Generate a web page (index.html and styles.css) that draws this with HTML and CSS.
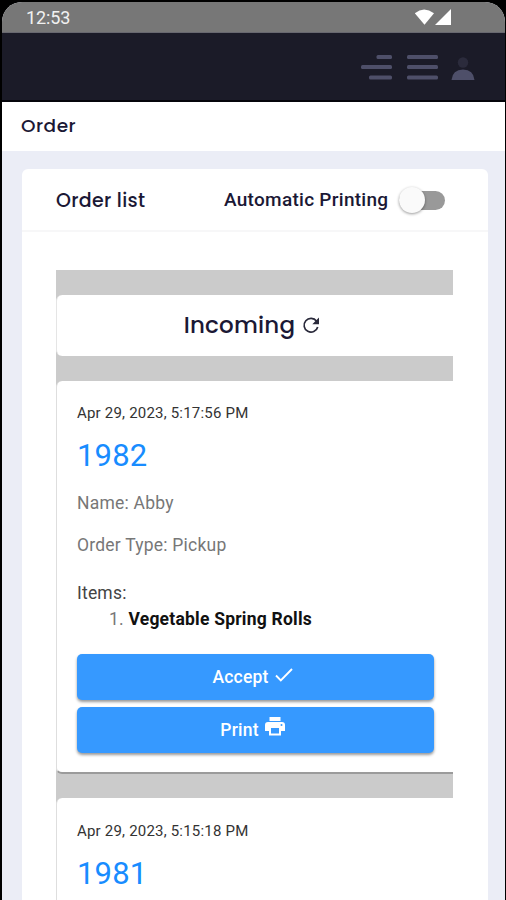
FILE: index.html
```html
<!DOCTYPE html>
<html lang="en">
<head>
<meta charset="utf-8">
<title>Order</title>
<link rel="stylesheet" href="styles.css">
</head>
<body>
<div class="screen">
  <div class="status">
    <span class="clock">12:53</span>
    <svg class="signals" width="38" height="18" viewBox="0 0 38 18"><path d="M.8 5.200Q10 -2 20 5.200L10.500 16.800Z" fill="#fff"/><path d="M37 1v16H21z" fill="#fff"/></svg>
  </div>
  <header class="topbar">
    <svg width="31" height="27" viewBox="0 0 31 27"><g fill="#4e4f69"><rect x="15.500" y="1" width="15.500" height="4" rx="1.500"/><rect y="11" width="31" height="4" rx="1.500"/><rect x="8" y="21.500" width="23" height="4" rx="1.500"/></g></svg>
    <svg class="menu" width="31" height="27" viewBox="0 0 31 27"><g fill="#4e4f69"><rect y="1" width="31" height="4" rx="1.500"/><rect y="11" width="31" height="4" rx="1.500"/><rect y="21.500" width="31" height="4" rx="1.500"/></g></svg>
    <svg class="user" width="24" height="27" viewBox="0 0 24 27"><circle cx="12" cy="8.500" r="5.200" fill="#2b2b3c"/><path d="M.5 26Q1.500 15.500 12 15.500T23.500 26z" fill="#4e4f69"/></svg>
  </header>
  <div class="page-title"><h1>Order</h1></div>
  <main class="content">
    <section class="panel">
      <div class="panel-head">
        <h2 class="list-title">Order list</h2>
        <span class="auto">Automatic Printing</span>
        <span class="toggle"><span class="knob"></span></span>
      </div>
      <div class="column">
        <div class="incoming"><h3>Incoming</h3><svg width="18" height="18" viewBox="0 0 18 18"><path d="M14.600 5.200A6.900 6.900 0 1 0 15.700 11" fill="none" stroke="#29293a" stroke-width="1.700"/><path d="M17 1.500v6.700h-6.700z" fill="#29293a"/></svg></div>
        <article class="order">
          <div class="date">Apr 29, 2023, 5:17:56 PM</div>
          <div class="number">1982</div>
          <div class="detail">Name: Abby</div>
          <div class="detail">Order Type: Pickup</div>
          <div class="items">Items:</div>
          <div class="item">1. <b>Vegetable Spring Rolls</b></div>
          <button class="btn"><span class="accept">Accept</span><svg class="check" width="18" height="16" viewBox="0 0 18 16"><path d="M1 8.500l4.800 4.800L17 2" fill="none" stroke="#fff" stroke-width="1.900"/></svg></button>
          <button class="btn"><span class="print">Print</span><svg class="printer" width="20" height="19" viewBox="0 0 20 19"><path fill="#fff" fill-rule="evenodd" d="M4.500 0h11v4h-11zM3 5h14a3 3 0 0 1 3 3v6h-4v4.500H4V14H0V8a3 3 0 0 1 3-3zM6 11v5.500h8V11zM16.500 7a1 1 0 1 0 .01 2 1 1 0 0 0-.01-2z"/></svg></button>
        </article>
        <article class="order next">
          <div class="date">Apr 29, 2023, 5:15:18 PM</div>
          <div class="number">1981</div>
        </article>
      </div>
    </section>
  </main>
</div>
</body>
</html>
```
FILE: styles.css
```css
* { box-sizing: border-box; }
body { margin: 0; background: #000; font-family: Roboto, sans-serif; height: 900px; overflow: hidden; }
h1, h2, h3 { margin: 0; font-family: Poppins, Inter, sans-serif; font-weight: 500; color: #1b1835; white-space: nowrap; }
.screen { margin: 2px 1px 0 2px; height: 898px; border-radius: 20px 20px 0 0; overflow: hidden; background: #ebedf6; }
.status { height: 31px; background: #777; border-bottom: 1px solid #686870; display: flex; align-items: center; justify-content: space-between; padding: 0 53px 0 24px; }
.clock { color: #f1f1f1; font-size: 18px; line-height: 30px; letter-spacing: -.1px; padding-top: 1px; }
.topbar { height: 69px; background: #1b1b28; border-bottom: 2px solid #05050b; display: flex; align-items: center; justify-content: flex-end; padding-right: 30px; }
.topbar svg { position: relative; top: 1px; }
.menu { margin: 0 13px 0 15px; }
.page-title { height: 49px; background: #fff; padding-left: 19px; display: flex; align-items: center; }
.page-title h1 { font-size: 18.5px; line-height: 48px; padding-bottom: 1px; letter-spacing: .5px; }
.content { padding: 18px 17px 0 20px; }
.panel { height: 760px; background: #fff; border-radius: 6px 6px 0 0; }
.panel-head { height: 63px; border-bottom: 2px solid #f7f7f8; display: flex; align-items: center; padding-left: 34px; }
.list-title { font-size: 19px; width: 168px; letter-spacing: .3px; padding-top: 2px; }
.auto { font-size: 19px; font-weight: 500; color: #1b1835; width: 175px; white-space: nowrap; letter-spacing: .28px; }
.toggle { position: relative; width: 46px; height: 19px; top: 1px; border-radius: 10px; background: #999; }
.knob { position: absolute; left: 0; top: -4px; width: 26px; height: 26px; border-radius: 50%; background: #fafafa; box-shadow: 0 1px 3px #0006; }
.column { margin: 38px 35px 0 34px; padding-top: 25px; background: #cbcbcb; }
.incoming { height: 61px; background: #fff; border-left: 1px solid #e5e5e5; border-radius: 6px 0 0 6px; display: flex; align-items: center; justify-content: center; gap: 7px; padding: 0 6px 2px 0; }
.incoming h3 { font-size: 23px; letter-spacing: .2px; }
.order { margin-top: 25px; height: 393px; background: #fff; border-left: 1px solid #dedede; border-bottom: 2px solid #9b9b9b; border-radius: 6px 0 0 6px; padding: 20px 19px 0 20px; }
.order.next { margin-top: 24px; padding-top: 21px; }
.date { font-size: 15px; line-height: 24px; color: #333; letter-spacing: .2px; }
.number { font-size: 31px; line-height: 40px; margin-top: 11px; color: #188cff; letter-spacing: .15px; }
.detail { font-size: 17.5px; line-height: 24px; color: #777; margin-top: 15px; letter-spacing: .22px; }
.detail + .detail { margin-top: 18px; }
.items { font-size: 17.5px; line-height: 24px; color: #444; margin-top: 24px; letter-spacing: .2px; }
.item { font-size: 17.5px; line-height: 24px; color: #777; margin: 2px 0 23px 32px; letter-spacing: .22px; }
.item b { color: #111; font-weight: 700; }
.btn { display: flex; width: 100%; height: 46px; border: 0; border-radius: 5px; background: #3699ff; color: #fff; font: 500 17.5px/46px Roboto, sans-serif; letter-spacing: .22px; align-items: center; justify-content: center; padding: 0 6px 0 0; margin-bottom: 7px; box-shadow: 0 2px 3px #0006; gap: 6px; }
.check { margin-bottom: 4px; }
.printer { margin-bottom: 8px; }
```
